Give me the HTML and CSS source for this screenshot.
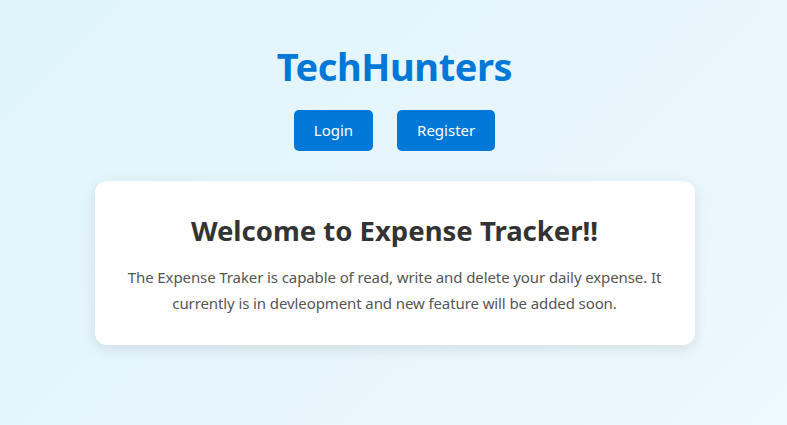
FILE: index.html
```html
<!DOCTYPE html>
<html lang="en">
<head>
<meta charset="utf-8">
<title>TechHunters</title>
<link rel="stylesheet" href="styles.css">
</head>
<body>
  <main class="page">
    <h1 class="brand">TechHunters</h1>
    <nav class="actions">
      <a class="btn" href="#">Login</a>
      <a class="btn" href="#">Register</a>
    </nav>
    <section class="card">
      <h2 class="card-title">Welcome to Expense Tracker!!</h2>
      <p class="card-text">The Expense Traker is capable of read, write and delete your daily expense. It currently is in devleopment and new feature will be added soon.</p>
    </section>
  </main>
</body>
</html>
```
FILE: styles.css
```css
* { box-sizing: border-box; }
html, body { height: 100%; }
body {
  margin: 0;
  font-family: "Noto Sans", "Open Sans", sans-serif;
  background: linear-gradient(135deg, #dff5fb 0%, #e8f6fc 60%, #eef8fd 100%);
  color: #333;
}
.page {
  display: flex;
  flex-direction: column;
  align-items: center;
  padding: 42px 19px 40px 21px;
}
.brand {
  margin: 0;
  font-size: 38px;
  line-height: 48px;
  font-weight: 700;
  color: #0078d7;
  letter-spacing: -0.4px;
}
.actions {
  display: flex;
  gap: 24px;
  margin-top: 20px;
}
.btn {
  display: block;
  background: #0078d7;
  color: #fff;
  text-decoration: none;
  font-size: 15px;
  line-height: 21px;
  padding: 10px 20px;
  border-radius: 5px;
}
.card {
  margin-top: 30px;
  width: 600px;
  background: #fff;
  border-radius: 12px;
  padding: 32px 30px 29px;
  text-align: center;
  box-shadow: 0 4px 14px rgba(0, 0, 0, 0.1);
}
.card-title {
  margin: 0;
  font-size: 27.5px;
  line-height: 36px;
  font-weight: 700;
  color: #333;
}
.card-text {
  margin: 15px 0 0;
  font-size: 15px;
  line-height: 26px;
  letter-spacing: -0.1px;
  color: #555;
}
```
